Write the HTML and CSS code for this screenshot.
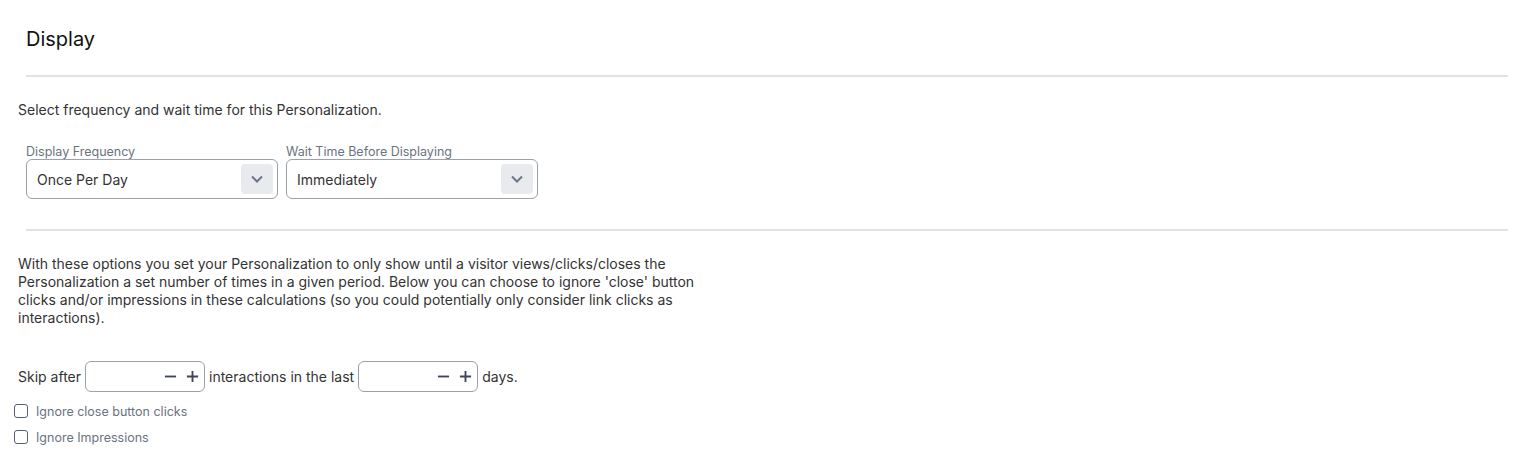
FILE: index.html
```html
<!DOCTYPE html>
<html lang="en">
<head>
  <meta charset="UTF-8">
  <title>Display</title>
  <link rel="stylesheet" href="styles.css">
</head>
<body>
  <div class="panel">
    <h2 class="title">Display</h2>
    <hr class="divider">

    <p class="intro">Select frequency and wait time for this Personalization.</p>

    <div class="fields">
      <label class="field">
        <span class="field-label">Display Frequency</span>
        <span class="select">
          <span class="select-value">Once Per Day</span>
          <span class="select-btn">
            <svg viewBox="0 0 12 8"><path d="M1 1.5l5 5 5-5"/></svg>
          </span>
        </span>
      </label>
      <label class="field">
        <span class="field-label">Wait Time Before Displaying</span>
        <span class="select">
          <span class="select-value">Immediately</span>
          <span class="select-btn">
            <svg viewBox="0 0 12 8"><path d="M1 1.5l5 5 5-5"/></svg>
          </span>
        </span>
      </label>
    </div>

    <hr class="divider divider-low">

    <p class="desc">With these options you set your Personalization to only show until a visitor views/clicks/closes the Personalization a set number of times in a given period. Below you can choose to ignore 'close' button clicks and/or impressions in these calculations (so you could potentially only consider link clicks as interactions).</p>

    <div class="skip-row">
      <span>Skip after</span>
      <span class="spinner">
        <svg viewBox="0 0 14 14"><path d="M1 7h12"/></svg>
        <svg viewBox="0 0 14 14"><path d="M1 7h12M7 1v12"/></svg>
      </span>
      <span>interactions in the last</span>
      <span class="spinner">
        <svg viewBox="0 0 14 14"><path d="M1 7h12"/></svg>
        <svg viewBox="0 0 14 14"><path d="M1 7h12M7 1v12"/></svg>
      </span>
      <span>days.</span>
    </div>

    <label class="check"><span class="box"></span>Ignore close button clicks</label>
    <label class="check"><span class="box"></span>Ignore Impressions</label>
  </div>
</body>
</html>
```

FILE: styles.css
```css
body {
  margin: 0;
  background: #fff;
  font-family: Inter, "Noto Sans", sans-serif;
  color: #333;
}
.panel {
  padding: 26px 20px 0 18px;
}
.title {
  margin: 0 0 0 8px;
  font-size: 20px;
  line-height: 26px;
  font-weight: 400;
  color: #111;
}
.divider {
  margin: 23px 0 0 8px;
  border: none;
  height: 2px;
  background: #e2e2e2;
}
.divider-low {
  margin-top: 30px;
}
.intro {
  margin: 24px 0 0;
  font-size: 14px;
  line-height: 18px;
}
.fields {
  display: flex;
  gap: 8px;
  margin: 25px 0 0 8px;
}
.field {
  display: flex;
  flex-direction: column;
  gap: 0;
}
.field-label {
  font-size: 12.5px;
  line-height: 15px;
  color: #6b7280;
}
.select {
  display: flex;
  align-items: center;
  justify-content: space-between;
  box-sizing: border-box;
  width: 252px;
  height: 40px;
  padding: 0 4px 0 10px;
  border: 1px solid #9aa1ac;
  border-radius: 6px;
  font-size: 14px;
}
.select-btn {
  display: flex;
  align-items: center;
  justify-content: center;
  width: 32px;
  height: 30px;
  background: #e8eaee;
  border-radius: 4px;
}
.select-btn svg {
  width: 12px;
  height: 8px;
  fill: none;
  stroke: #6b7789;
  stroke-width: 2;
}
.desc {
  margin: 24px 0 0;
  max-width: 715px;
  font-size: 14px;
  line-height: 18px;
}
.skip-row {
  display: flex;
  align-items: center;
  gap: 4px;
  margin-top: 34px;
  font-size: 14px;
}
.spinner {
  display: flex;
  align-items: center;
  justify-content: flex-end;
  gap: 9px;
  box-sizing: border-box;
  width: 120px;
  height: 31px;
  padding-right: 5px;
  border: 1px solid #9aa1ac;
  border-radius: 6px;
}
.spinner svg {
  width: 13px;
  height: 13px;
  fill: none;
  stroke: #3d4656;
  stroke-width: 2;
}
.check {
  display: flex;
  align-items: center;
  gap: 8px;
  height: 26px;
  margin-left: -4px;
  font-size: 12.5px;
  color: #6b7280;
}
.skip-row + .check {
  margin-top: 6px;
}
.box {
  box-sizing: border-box;
  width: 14px;
  height: 14px;
  border: 1px solid #566173;
  border-radius: 3px;
}
```
